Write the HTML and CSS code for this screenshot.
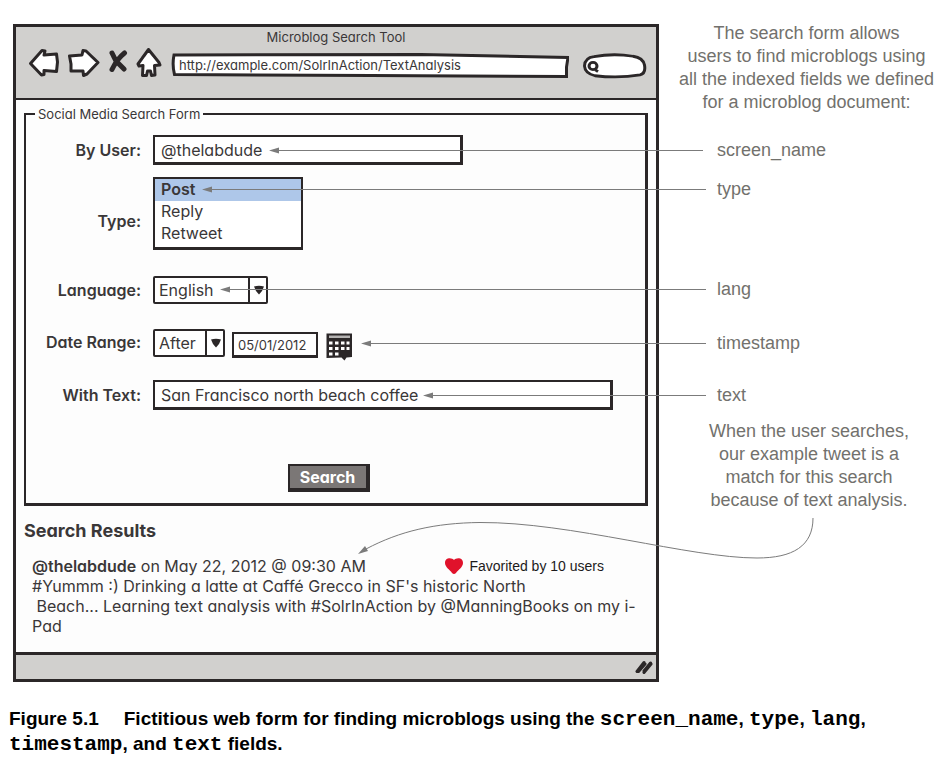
FILE: index.html
```html
<!DOCTYPE html>
<html lang="en">
<head>
<meta charset="utf-8">
<title>Microblog Search Tool</title>
<meta name="viewport" content="width=device-width, initial-scale=1">
<link rel="stylesheet" href="styles.css">
</head>
<body>
<figure class="figure">
  <div class="stage">
    <section class="window">
      <header class="chrome">
        <h1 class="chrome-title">Microblog Search Tool</h1>
        <div class="toolbar">
          <button class="nav-button" type="button" aria-label="Back">
            <svg width="32" height="30" viewBox="0 0 32 30"><path d="M2.5 15.5 L14 2.5 L17 3 L16 7 L28.500 6 L29.500 14 L28.500 23.500 L16 22.500 L16 26.500 L13.500 27 Z"/></svg>
          </button>
          <button class="nav-button" type="button" aria-label="Forward">
            <svg width="32" height="30" viewBox="0 0 32 30"><path d="M1.500 8 L14 7 L15 2.500 L18 3 L30 14.500 L19 26 L15.500 27.500 L15 23 L3 23 L3 16 Z"/></svg>
          </button>
          <button class="nav-button" type="button" aria-label="Stop">
            <svg width="20" height="30" viewBox="0 0 20 30"><path class="cross" d="M4 5 L8 13 L16 21 M16.500 5 Q9 11 4 21.500"/></svg>
          </button>
          <button class="nav-button" type="button" aria-label="Home">
            <svg width="26" height="30" viewBox="0 0 26 30"><path d="M12.500 1.500 L2 16 L3 18 L7 17.500 L6.500 27.500 L10.500 27.500 L11.500 23 L14.500 23 L15.500 27.500 L19 27 L18.500 17.500 L24 17 L23 14.500 Z"/></svg>
          </button>
          <div class="address">
            <svg class="sketch" viewBox="0 0 398 26" preserveAspectRatio="none"><path d="M3 2 Q130 2 250 1.500 L397 4.500 L395.500 14 L395.500 23.500 L200 22.500 L3.500 21.500 Q1 12 3 2 Z"/></svg>
            <input class="address-input" type="text" aria-label="Address" value="http://example.com/SolrInAction/TextAnalysis">
          </div>
          <div class="quick">
            <svg class="sketch" viewBox="0 0 64 28" preserveAspectRatio="none"><path d="M11 4 Q30 0 50 3.500 Q60 5 61.500 13 Q63 22 57 23.500 Q36 27.500 12 24.500 Q2 22 1.500 14 Q2 5 11 4 Z"/><circle class="lens" cx="10" cy="14" r="4"/><path class="lens" d="M12 18 L15 20"/></svg>
            <input class="quick-input" type="search" aria-label="Quick search">
          </div>
        </div>
      </header>

      <div class="content">
        <form>
          <fieldset class="form">
            <legend>Social Media Search Form</legend>
            <label for="user">By User:</label>
            <input class="field user" id="user" type="text" value="@thelabdude">

            <label for="type">Type:</label>
            <select class="types" id="type" size="3">
              <option selected>Post</option>
              <option>Reply</option>
              <option>Retweet</option>
            </select>

            <label for="language">Language:</label>
            <div class="line language">
              <div class="drop">
                <select class="drop-select wide" id="language"><option>English</option></select>
                <span class="drop-mark"><svg width="10" height="10" viewBox="0 0 10 10"><path d="M0 1.500 Q5 0 10 1.500 L8 6 L5 9.500 L2 6 Z"/></svg></span>
              </div>
            </div>

            <label for="range">Date Range:</label>
            <div class="line dates">
              <div class="drop">
                <select class="drop-select" id="range"><option>After</option></select>
                <span class="drop-mark"><svg width="10" height="10" viewBox="0 0 10 10"><path d="M0 1.500 Q5 0 10 1.500 L8 6 L5 9.500 L2 6 Z"/></svg></span>
              </div>
              <input class="date" type="text" aria-label="Date" value="05/01/2012">
              <button class="calendar" type="button" aria-label="Pick a date">
                <svg width="27" height="28" viewBox="0 0 27 28">
                  <path class="ink" d="M0.500 0.500 H26 V24 L20.500 24.500 L18.500 27.500 L15.500 24.500 L0.500 25 Z"/>
                  <path class="pale" d="M3 2.500 H24 V5 H3 Z"/>
                  <path class="paper" d="M3 8.500h3.500v3H3z M9 8.500h3.500v3H9z M15 8.500h3.500v3H15z M20.500 8.500h3v3h-3z M3 14h3.500v3H3z M9 14h3.500v3H9z M15 14h3.500v3H15z M20.500 14h3v3h-3z M3 19.500h3.500v3H3z M9 19.500h3.500v3H9z"/>
                </svg>
              </button>
            </div>

            <label for="words">With Text:</label>
            <input class="field words" id="words" type="text" value="San Francisco north beach coffee">

            <button class="submit" type="submit">Search</button>
          </fieldset>
        </form>

        <h2 class="results-title">Search Results</h2>
        <article class="result">
          <div class="result-head">
            <span class="byline"><b>@thelabdude</b> on May 22, 2012 @ 09:30 AM</span>
            <span class="favorite">
              <svg width="18" height="16" viewBox="0 0 18 16"><path d="M9 2 C7 -0.500 0 -1 0 5 C0 9 5 12 7 15 Q9 17 11 15 C13 12 18 9 18 5 C18 -1 11 -0.500 9 2 Z"/></svg>
              Favorited by 10 users
            </span>
          </div>
          <p>#Yummm :) Drinking a latte at Caffé Grecco in SF's historic North<br>&nbsp;Beach... Learning text analysis with #SolrInAction by @ManningBooks on my i-<br>Pad</p>
        </article>
      </div>

      <footer class="status">
        <svg width="18" height="16" viewBox="0 0 18 16"><path d="M2 12.500 L9 3.500 M3.500 12.500 L10 5 M9 13.500 L16 5 M9 12 L15.500 4"/></svg>
      </footer>
    </section>

    <aside class="notes">
      <p class="note">The search form allows<br>users to find microblogs using<br>all the indexed fields we defined<br>for a microblog document:</p>
      <ul class="keys">
        <li class="key-name">screen_name</li>
        <li class="key-type">type</li>
        <li class="key-lang">lang</li>
        <li class="key-time">timestamp</li>
        <li class="key-text">text</li>
      </ul>
      <p class="note match">When the user searches,<br>our example tweet is a<br>match for this search<br>because of text analysis.</p>
    </aside>

    <svg class="arrows" width="951" height="690" viewBox="0 0 951 690" aria-hidden="true">
      <path d="M278 150.500H703 M212 189.500H706 M230 289.500H706 M371 343.500H706 M433 395.500H706"/>
      <path d="M813 518 C813 546 793 558 757 558 C690 558 570 522 480 522.500 C435 523 400 531 366 549"/>
      <path class="tip" d="M269 150.500l10-3v6z M202 189.500l10-3v6z M220 289.500l10-3v6z M361 343.500l10-3v6z M423 395.500l10-3v6z M358 554l7-8 3 5z"/>
    </svg>
  </div>

  <figcaption class="caption"><span class="number">Figure 5.1</span>Fictitious web form for finding microblogs using the <code>screen_name</code>, <code>type</code>, <code>lang</code>, <code>timestamp</code>, and <code>text</code> fields.</figcaption>
</figure>
</body>
</html>
```

FILE: styles.css
```css
:root {
  --ink: #2b2728;
  --text: #3a3738;
  --panel: #d1d0ce;
  --note: #72716d;
}

* { box-sizing: border-box; }

body {
  margin: 0;
  background: #fff;
  color: var(--text);
  font-family: Inter, "Liberation Sans", sans-serif;
  font-feature-settings: "cv11";
  font-size: 16px;
  line-height: 20px;
}

input, select, button {
  margin: 0;
  color: inherit;
  font: inherit;
  font-feature-settings: inherit;
}

h1, h2, p, ul { margin: 0; padding: 0; }

.figure { margin: 0; }

.stage {
  position: relative;
  display: grid;
  grid-template-columns: minmax(0, 646px) minmax(0, 1fr);
  align-items: start;
  padding-left: 13px;
}

/* Browser window */

.window {
  margin-top: 24px;
  border: 3px solid var(--ink);
  background: #fdfdfd;
}

.chrome {
  height: 73px;
  border-bottom: 2px solid var(--ink);
  background: var(--panel);
}

.chrome-title {
  font-size: 13px;
  font-weight: 400;
  text-align: center;
}

.toolbar {
  display: flex;
  align-items: center;
  padding: 0 9px 0 12px;
}

.nav-button {
  margin-right: 8px;
  padding: 0;
  border: 0;
  background: none;
  line-height: 0;
}

.nav-button path {
  fill: #fff;
  stroke: var(--ink);
  stroke-width: 3;
  stroke-linejoin: round;
}

.nav-button .cross {
  fill: none;
  stroke-width: 5;
  stroke-linecap: round;
}

.address {
  position: relative;
  flex: 1;
  margin: 6px 14px 0 1px;
}

.quick {
  position: relative;
  width: 64px;
  margin-top: 6px;
}

.sketch {
  position: absolute;
  inset: 0;
  width: 100%;
  height: 100%;
}

.sketch path {
  fill: #fff;
  stroke: var(--ink);
  stroke-width: 3;
}

.sketch .lens {
  fill: none;
  stroke: var(--ink);
  stroke-width: 3;
}

.address-input, .quick-input {
  position: relative;
  display: block;
  width: 100%;
  height: 26px;
  padding: 0 0 2px 8px;
  border: 0;
  background: none;
  font-size: 13px;
}

.quick-input { padding-left: 18px; }

/* Search form */

.content { padding: 6px 8px 16px; }

.form {
  display: grid;
  grid-template-columns: 115px minmax(0, 1fr);
  column-gap: 12px;
  min-width: 0;
  margin: 0;
  padding: 13px 0 11px;
  border: solid var(--ink);
  border-width: 2px 3px 3px 2px;
}

.form legend {
  margin-left: 9px;
  padding: 0 3px;
  font-size: 13px;
  line-height: 16px;
}

.form label {
  align-self: center;
  font-weight: 600;
  text-align: right;
}

.field {
  width: 100%;
  height: 30px;
  padding: 0 6px;
  border: solid var(--ink);
  border-width: 2px 3px 3px 2px;
  background: #fff;
}

.user { max-width: 310px; }
.words { max-width: 460px; }

.types {
  width: 150px;
  height: 73px;
  margin: 12px 0 26px;
  padding: 0;
  overflow: hidden;
  border: solid var(--ink);
  border-width: 2px 2px 3px;
  border-radius: 0;
  outline: 0;
  background: #fff;
}

.types option {
  height: 22px;
  min-height: 22px;
  padding: 0 6px;
  line-height: 22px;
}

.types option:checked {
  background: #aec7e9 linear-gradient(#aec7e9, #aec7e9);
  color: var(--text);
  font-weight: 600;
}

.line {
  display: flex;
  align-items: flex-start;
}

.drop { position: relative; }

.drop-select {
  display: block;
  width: 72px;
  height: 28px;
  padding: 0 4px;
  appearance: none;
  border: 2px solid var(--ink);
  border-radius: 2px;
  background: #fff;
}

.drop-select.wide { width: 115px; }

.drop-mark {
  position: absolute;
  top: 0;
  right: 0;
  bottom: 0;
  display: flex;
  align-items: center;
  justify-content: center;
  width: 20px;
  border-left: 2px solid var(--ink);
  pointer-events: none;
}

.drop-mark path { fill: var(--ink); }

.dates { margin: 25px 0 19px; }

.date {
  width: 86px;
  height: 26px;
  margin: 3px 8px 0 7px;
  padding: 0 4px;
  border: solid var(--ink);
  border-width: 2px 2px 3px;
  background: #fff;
  font-size: 13px;
}

.calendar {
  margin-top: 4px;
  padding: 0;
  border: 0;
  background: none;
  line-height: 0;
}

.calendar .ink { fill: var(--ink); }
.calendar .pale { fill: #b5b3b2; }
.calendar .paper { fill: #fff; }

.submit {
  grid-column: 1 / -1;
  justify-self: center;
  width: 82px;
  height: 28px;
  margin-top: 54px;
  margin-right: 14px;
  padding: 0;
  border: solid var(--ink);
  border-width: 2px 4px 4px 2px;
  background: #7b7776;
  color: #fff;
  font-weight: 700;
}

/* Results */

.results-title {
  margin-top: 15px;
  font-size: 18px;
  font-weight: 700;
}

.result { padding: 15px 0 0 8px; }

.result-head {
  display: flex;
  justify-content: space-between;
}

.result-head b { font-weight: 600; }

.favorite {
  display: flex;
  align-items: center;
  gap: 6px;
  margin-right: 44px;
  color: #1c1a1b;
  font-family: "Liberation Sans", Arial, sans-serif;
  font-size: 14px;
}

.favorite path { fill: #e0122b; }

.status {
  display: flex;
  align-items: center;
  justify-content: flex-end;
  height: 27px;
  padding-right: 3px;
  border-top: 3px solid var(--ink);
  background: var(--panel);
}

.status path {
  fill: none;
  stroke: var(--ink);
  stroke-width: 3;
  stroke-linecap: round;
}

/* Callouts */

.notes {
  padding-top: 22px;
  color: var(--note);
  font-family: "Liberation Sans", Arial, sans-serif;
  font-size: 18px;
  line-height: 23px;
}

.note {
  padding-left: 3px;
  text-align: center;
}

.keys {
  padding-left: 58px;
  list-style: none;
}

.key-name { margin-top: 25px; }
.key-type { margin-top: 16px; }
.key-lang { margin-top: 77px; }
.key-time { margin-top: 31px; }
.key-text { margin-top: 29px; }

.match {
  margin-top: 13px;
  padding-left: 8px;
}

.arrows {
  position: absolute;
  top: 0;
  left: 0;
  fill: none;
  stroke: #7b7b7b;
  stroke-width: 1;
  pointer-events: none;
}

.arrows .tip {
  fill: #7b7b7b;
  stroke: none;
}

.caption {
  padding: 24px 40px 0 9px;
  color: #000;
  font-family: "Liberation Sans", Arial, sans-serif;
  font-size: 19px;
  font-weight: 700;
  line-height: 25px;
}

.number { margin-right: 25px; }

.caption code {
  font-family: "Liberation Mono", "Courier New", monospace;
  font-size: 21px;
  line-height: 20px;
}
```
